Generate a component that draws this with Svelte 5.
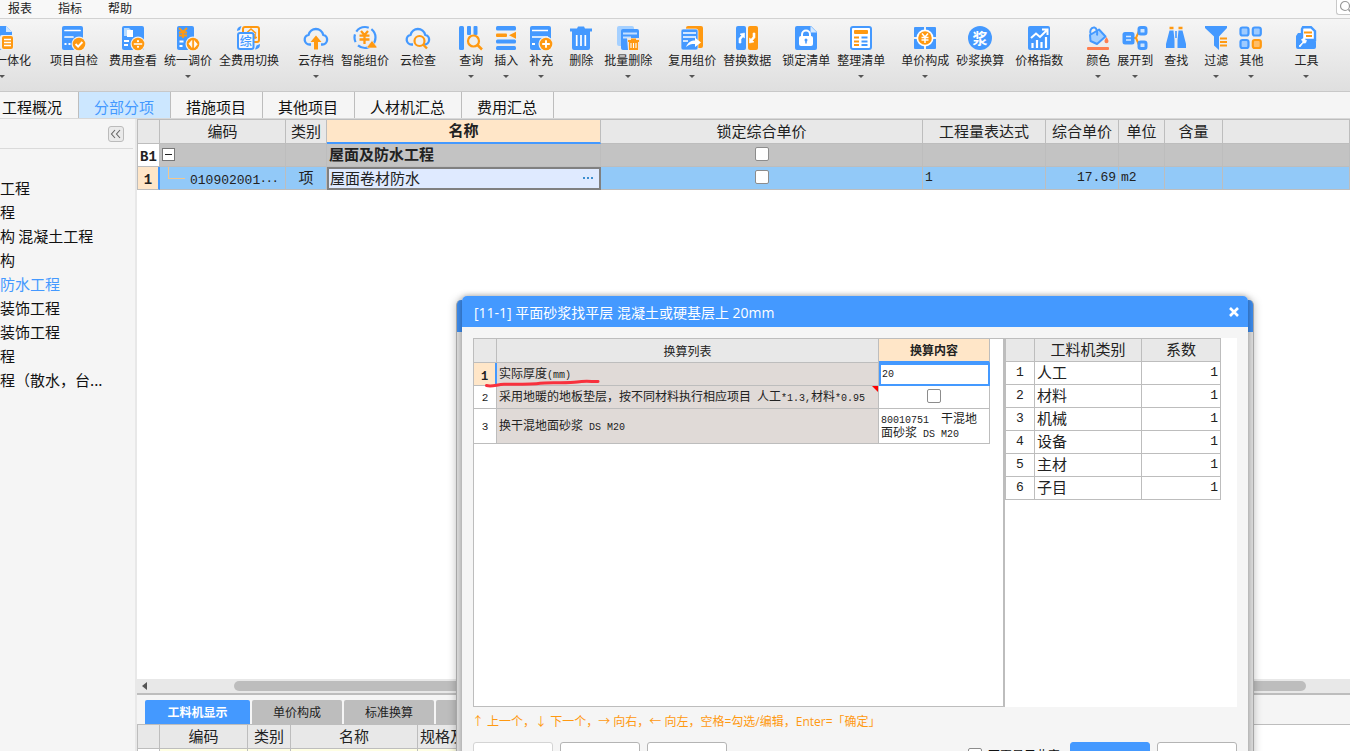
<script>
  const B = '#4499ff';
  const O = '#ff9911';
  const W = '#ffffff';
  const badge = `<circle cx="17" cy="18" r="7.5" fill="#f0f0f0"/><circle cx="17" cy="18" r="6.3" fill="${O}"/>`;
  const cloud = `<path d="M7 18.5H5.6A4.9 4.9 0 0 1 4.6 8.8 7.5 7.5 0 0 1 19.2 8.8 4.9 4.9 0 0 1 18.4 18.5H17" fill="none" stroke="${B}" stroke-width="2.3"/>`;
  const cjk = 'font-family="Noto Sans CJK SC" text-anchor="middle"';

  const icons = {
    page: `<path d="M0 0h16l6 6v18H0z" fill="${B}"/><path d="M16 0v6h6z" fill="#cfe6ff"/><rect x="10" y="9" width="14" height="15" rx="2" fill="#f0f0f0"/><rect x="12" y="10" width="11" height="13" rx="2" fill="${O}"/><path d="M14 13.5h7M14 16.5h7M14 19.5h7" stroke="#fff" stroke-width="1.3"/>`,
    check: `<rect x="0" y="0" width="21" height="24" rx="2" fill="${B}"/><path d="M3 4.5h15M3 11h8" stroke="#fff" stroke-width="1.7" stroke-linecap="round"/><path d="M2.5 18h2M6.5 18h2" stroke="#fff" stroke-width="2"/>${badge}<path d="M13.6 18l2.5 2.6 4.3-4.6" fill="none" stroke="#fff" stroke-width="1.9"/>`,
    fee: `<rect x="1" y="0" width="22" height="24" rx="2" fill="${B}"/><path d="M3 2h5l2 2v6H3z" fill="#b9dcff"/><path d="M6 4h6v7H6z" fill="#fff"/><path d="M3 15h5M3 19h4" stroke="#fff" stroke-width="2"/>${badge}<path d="M12.8 18h8.4" stroke="#fff" stroke-width="1.5"/><circle cx="17" cy="15.2" r="1.1" fill="#fff"/><circle cx="17" cy="20.8" r="1.1" fill="#fff"/>`,
    adjust: `<rect x="1" y="0" width="17" height="24" rx="2" fill="${B}"/><path d="M3 2l4 4L11 2M3 6.500h8M3 9.500h8M7 6v6" fill="none" stroke="${O}" stroke-width="1.800"/><path d="M3.500 15.500h4M3.500 20h3" stroke="#fff" stroke-width="1.800"/>${badge}<path d="M15.800 21.500v-7l-3 3.500M18.400 14.500v7l3-3.500" fill="#fff" stroke="#fff" stroke-width=".8"/>`,
    full: `<rect x="6" y="1" width="16" height="15" rx="2" fill="none" stroke="${O}" stroke-width="2"/><path d="M9 7.500L14 3l5 4.500M11 8h6M17 11.500h3M18 8v5" fill="none" stroke="${O}" stroke-width="1.600"/><rect x="1" y="7" width="15.500" height="16" rx="2" fill="#f3f8ff" stroke="${B}" stroke-width="2"/><text x="8.800" y="19.500" font-size="12" font-weight="500" fill="${B}" ${cjk}>综</text><path d="M0 5c0-3 1.500-4 4.500-5L3 4zM23 18c0 3-1 5-5 5.500l1.500-4z" fill="${B}"/>`,
    cloudUp: `${cloud}<path d="M12 9.500l5.500 6.500H14v7.500h-4V16H6.500z" fill="${O}"/>`,
    smart: `<circle cx="12" cy="11.500" r="10.500" fill="none" stroke="${B}" stroke-width="2.200" stroke-dasharray="24 4 8 3 14 3"/><path d="M8 5l3.500 4L15 5M6.500 9.700h10M6.500 13.500h10M11.500 9v9" fill="none" stroke="${O}" stroke-width="2.300"/><path d="M14 21l5-6.500 5 6.500a1 1 0 0 1-1 1h-8a1 1 0 0 1-1-1z" fill="${O}" stroke="#f0f0f0" stroke-width=".6"/>`,
    cloudFind: `${cloud}<circle cx="13.500" cy="15" r="5" fill="#f0f0f0" stroke="${O}" stroke-width="2.200"/><path d="M17 18.500l4 4" stroke="${O}" stroke-width="2.400"/>`,
    query: `<rect x="0" y="0" width="5" height="24" rx="1.500" fill="${B}"/><rect x="8" y="0" width="4" height="9" rx="1" fill="${B}"/><rect x="14.500" y="0" width="4" height="9" rx="1" fill="${B}"/><circle cx="14.500" cy="15" r="5.500" fill="#eee" stroke="${O}" stroke-width="2.200"/><path d="M18.500 19l4.500 4.500" stroke="${O}" stroke-width="2.500"/>`,
    insert: `<rect x="2" y="0" width="20" height="4.500" rx="1.500" fill="${B}"/><rect x="2" y="7.500" width="11" height="3.500" rx="1" fill="${O}"/><path d="M15 9.200l7-3.500v7z" fill="${O}"/><rect x="2" y="13.500" width="20" height="4" rx="1.500" fill="${B}"/><rect x="2" y="20" width="20" height="4" rx="1.500" fill="${B}"/>`,
    supply: `<rect x="1" y="0" width="21" height="24" rx="2" fill="${B}"/><path d="M3 4.500h16M3 11h16" stroke="#fff" stroke-width="1.600"/><path d="M3 18h3" stroke="#fff" stroke-width="2"/>${badge}<path d="M13.200 18h7.600M17 14.200v7.600" stroke="#fff" stroke-width="1.900"/>`,
    trash: `<path d="M1 2.500h7l1-2h6l1 2h7v3H1zM3 5h18v17a2 2 0 0 1-2 2H5a2 2 0 0 1-2-2z" fill="${B}"/><path d="M7.700 9v11M12 9v11M16.300 9v11" stroke="#fff" stroke-width="1.700"/>`,
    batch: `<rect x="1" y="0" width="17" height="20" rx="2" fill="#a5d0ff"/><rect x="5" y="3" width="18" height="21" rx="2" fill="${B}"/><path d="M7 7.500h14M7 11.500h8" stroke="#c5e0ff" stroke-width="1.800"/><path d="M11 12h13v12H12z" fill="#f0e6dc"/><path d="M12 14h3v-1.500h5V14h3v2h-1v8h-9v-8h-1z" fill="${O}"/><path d="M15 17v5M17.500 17v5M20 17v5" stroke="#fff" stroke-width="1.100"/>`,
    reuse: `<rect x="6" y="0" width="17" height="22" rx="2" fill="${O}"/><rect x="1" y="3" width="17" height="21" rx="2" fill="${B}" stroke="#f4f4f4" stroke-width=".7"/><path d="M3 7h13M3 11h13M3 15h5" stroke="#fff" stroke-width="1.700"/><path d="M6 21c2-5 5-6.500 9-6.500V11.500l6 5-6 4.500v-3c-4 0-6 .5-9 3z" fill="#fff"/>`,
    replace: `<rect x="1" y="0" width="10" height="24" rx="2" fill="${B}"/><rect x="13" y="0" width="10" height="24" rx="2" fill="${O}"/><path d="M4 17v-4.500l2.500-3L5 8l4.500-1V12L8 10.800l-2 2.400V17zM20 7v4.500l-2.500 3L19 16l-4.500 1V12l1.500 1.200 2-2.400V7z" fill="#fff" stroke="#fff" stroke-width=".6"/>`,
    lock: `<path d="M3 0h14l6 6v16a2 2 0 0 1-2 2H3a2 2 0 0 1-2-2V2a2 2 0 0 1 2-2z" fill="${B}"/><path d="M16.500 0v6.500H23z" fill="#d5e9ff"/><rect x="5" y="10" width="14" height="10" rx="2" fill="#fff"/><path d="M8 11V8.500a4 4 0 0 1 8 0V11" fill="none" stroke="#fff" stroke-width="2"/><circle cx="12" cy="14" r="1.500" fill="${B}"/><path d="M12 14v3.500" stroke="${B}" stroke-width="1.500"/>`,
    tidy: `<rect x="2" y="1" width="20" height="22" rx="2" fill="#fff" stroke="${B}" stroke-width="2"/><rect x="5" y="4" width="14" height="4" rx="1" fill="${O}"/><path d="M5 11.500h5M5 15.500h5M5 19h5" stroke="${O}" stroke-width="1.800"/><path d="M12.500 11.500h6M12.500 15.500h6M12.500 19h6" stroke="${B}" stroke-width="1.800"/>`,
    unit: `<rect x="1" y="1" width="22" height="22" rx="1" fill="${B}"/><path d="M12 0v24M0 12h24" stroke="#f0f0f0" stroke-width="2"/><circle cx="12" cy="12" r="8.500" fill="#fff"/><circle cx="12" cy="12" r="6.800" fill="${O}"/><path d="M9 7.500l3 3.500 3-3.500M8.500 11.500h7M8.500 14h7M12 11v6" fill="none" stroke="#fff" stroke-width="1.500"/>`,
    mortar: `<circle cx="12" cy="12" r="12" fill="${B}"/><text x="12" y="17.500" font-size="15" font-weight="700" fill="${W}" ${cjk}>浆</text>`,
    index: `<rect x="1" y="0" width="22" height="24" rx="2" fill="${B}"/><path d="M4 12l5-4.500 4 3.500 7-7M15 3.500h5.500V9" fill="none" stroke="#fff" stroke-width="2"/><path d="M5.500 22v-5M10 22v-8M14.500 22v-6M19 22V11" stroke="#fff" stroke-width="2.200"/>`,
    color: `<path d="M4 9l9-5.500 6.500 7L11 18 4.500 15z" fill="#a5d0ff" stroke="${B}" stroke-width="2" stroke-linejoin="round"/><path d="M5 9C3 5 5 1 8.500 1.500c2.500.5 3 5 2.500 8" fill="none" stroke="${B}" stroke-width="2"/><path d="M20.500 11c1.500 2.500 2 3.300 2 4.200a2 2 0 0 1-4 0c0-.9.500-1.700 2-4.200z" fill="#ff7f50"/><rect x="1" y="21" width="22" height="3" rx="1" fill="#ff7f50"/>`,
    expand: `<path d="M10 12h3l3-7h2M13 12l3 7h2" fill="none" stroke="${O}" stroke-width="2"/><rect x="-.5" y="6" width="12" height="12.500" rx="2.500" fill="${B}"/><path d="M3 10.500h5M3 14h5" stroke="#d5e9ff" stroke-width="1.700"/><rect x="16" y="1.500" width="7" height="6.500" rx="1.800" fill="#cce4ff" stroke="${B}" stroke-width="3"/><rect x="16" y="16" width="7" height="6.500" rx="1.800" fill="#cce4ff" stroke="${B}" stroke-width="3"/>`,
    find: `<path d="M5.500 2h4M14.500 2h4" stroke="${O}" stroke-width="2.500"/><path d="M5.500 4.500h4L10.500 14v8H2v-4zM18.500 4.500h-4L13.500 14v8H22v-4z" fill="${B}"/><path d="M12 5v7" stroke="${B}" stroke-width="1.600"/>`,
    filter: `<path d="M1 0h22v2l-8 8.500V24l-5-4.500v-9L1 2z" fill="${B}"/><path d="M16 12.500h7M16 16h7M16 19.500h7" stroke="${O}" stroke-width="2"/>`,
    other: `<g fill="#9ecbff" stroke="${B}" stroke-width="2.200"><rect x="1.500" y="1.500" width="8" height="8" rx="2"/><rect x="13.800" y="1.500" width="8" height="8" rx="2"/><rect x="1.500" y="14" width="8" height="8" rx="2"/></g><rect x="13.800" y="14" width="8" height="8" rx="2" fill="#ffbe69" stroke="${O}" stroke-width="2.200"/>`,
    tool: `<path d="M9 1.200h8l4 4V14H8V3z" fill="#fff" stroke="${B}" stroke-width="2.400"/><path d="M10 6.500h8M12 10h6" stroke="${O}" stroke-width="1.800"/><path d="M4 7h4v5l3 2h9a2 2 0 0 1 2 2v5a2 2 0 0 1-2 2H4a2 2 0 0 1-2-2V10z" fill="${B}"/><path d="M5 20l4-4-1.500-2.500 3-1.500.5 2 1.500.5-1 2.500H9l-3 4z" fill="#fff" stroke="#fff" stroke-width=".7"/>`
  };

  const tools = [
    ['项目自检', 'check', 0, 'g5'],
    ['费用查看', 'fee', 0, 'g3'],
    ['统一调价', 'adjust', 1, 'g2'],
    ['全费用切换', 'full', 0, 'g2'],
    ['云存档', 'cloudUp', 1, 'g5'],
    ['智能组价', 'smart', 0, 'g2'],
    ['云检查', 'cloudFind', 0, 'g3'],
    ['查询', 'query', 1, 'g6'],
    ['插入', 'insert', 1, 'g3'],
    ['补充', 'supply', 1, 'g3'],
    ['删除', 'trash', 0, 'g4'],
    ['批量删除', 'batch', 1, 'g3'],
    ['复用组价', 'reuse', 1, 'g4'],
    ['替换数据', 'replace', 0, 'g2'],
    ['锁定清单', 'lock', 0, 'g3'],
    ['整理清单', 'tidy', 1, 'g2'],
    ['单价构成', 'unit', 1, 'g4'],
    ['砂浆换算', 'mortar', 0, 'g2'],
    ['价格指数', 'index', 0, 'g3'],
    ['颜色', 'color', 1, 'g6'],
    ['展开到', 'expand', 1, 'g2'],
    ['查找', 'find', 0, 'g3'],
    ['过滤', 'filter', 1, 'g4'],
    ['其他', 'other', 1, 'g3'],
    ['工具', 'tool', 1, 'g8']
  ];

  const tabs = ['工程概况', '分部分项', '措施项目', '其他项目', '人材机汇总', '费用汇总'];
  const tree = ['工程', '程', '构 混凝土工程', '构', '防水工程', '装饰工程', '装饰工程', '程', '程（散水，台...'];
  const kinds = ['人工', '材料', '机械', '设备', '主材', '子目'];
  let activeTab = $state(1);
  let activeNode = $state(4);
  let thickness = $state('20');
</script>

<div class="app">
  <nav class="menu">
    <button>报表</button><button>指标</button><button>帮助</button>
    <button class="search" aria-label="搜索">
      <svg width="14" height="14" viewBox="0 0 14 14"><circle cx="6" cy="6" r="4.500" fill="none" stroke="#999" stroke-width="1.200" /><path d="M9.500 9.500l4 4" stroke="#999" stroke-width="1.600" /></svg>
    </button>
  </nav>

  <div class="toolbar">
    <button class="tool cut">
      <svg width="24" height="24" viewBox="0 0 24 24">{@html icons.page}</svg>
      <span>一体化</span><i class="caret"></i>
    </button>
    {#each tools as [label, icon, drop, gap]}
      <button class="tool {gap}">
        <svg width="24" height="24" viewBox="0 0 24 24">{@html icons[icon]}</svg>
        <span>{label}</span>
        {#if drop}<i class="caret"></i>{/if}
      </button>
    {/each}
  </div>

  <div class="tabs">
    {#each tabs as t, i}
      <button class:active={i === activeTab} onclick={() => (activeTab = i)}>{t}</button>
    {/each}
  </div>

  <div class="main">
    <aside>
      <div class="side-head">
        <button class="fold" aria-label="折叠"><svg width="14" height="14" viewBox="0 0 14 14"><path d="M6 3L2.500 7 6 11M11 3L7.500 7l3.500 4" fill="none" stroke="#666" stroke-width="1.100" /></svg></button>
      </div>
      <ul>
        {#each tree as n, i}
          <li><button class:active={i === activeNode} onclick={() => (activeNode = i)}>{n}</button></li>
        {/each}
      </ul>
    </aside>

    <section class="work">
      <div class="grid-wrap">
        <table class="grid list">
          <colgroup><col class="c22" /><col class="c126" /><col class="c41" /><col class="c274" /><col class="c322" /><col class="c123" /><col class="c73" /><col class="c46" /><col class="c58" /><col /></colgroup>
          <thead>
            <tr><th></th><th>编码</th><th>类别</th><th class="hot">名称</th><th>锁定综合单价</th><th>工程量表达式</th><th>综合单价</th><th>单位</th><th>含量</th><th></th></tr>
          </thead>
          <tbody>
            <tr class="group">
              <td class="num"><b class="mono">B1</b></td>
              <td><button class="minus" aria-label="收起"></button></td>
              <td></td><td><b>屋面及防水工程</b></td>
              <td class="mid"><input type="checkbox" aria-label="锁定屋面及防水工程" /></td>
              <td></td><td></td><td></td><td></td><td></td>
            </tr>
            <tr class="sel">
              <td class="num cur"><b class="mono">1</b></td>
              <td class="code"><i class="branch"></i><span class="mono">010902001</span><span class="dots">···</span></td>
              <td class="mid">项</td>
              <td class="edit"><div><span>屋面卷材防水</span><button aria-label="更多"><i></i><i></i><i></i></button></div></td>
              <td class="mid"><input type="checkbox" aria-label="锁定屋面卷材防水" /></td>
              <td class="mono">1</td><td class="mono end">17.69</td><td class="mono">m2</td><td></td><td></td>
            </tr>
          </tbody>
        </table>
      </div>
      <div class="scroll"><i class="arrow"></i><i class="thumb"></i></div>
      <div class="bottom">
        <div class="subtabs">
          <button class="active">工料机显示</button><button>单价构成</button><button>标准换算</button><button aria-label="更多页签"></button>
        </div>
        <div class="sub-wrap">
          <table class="grid sub">
            <colgroup><col class="c22" /><col class="c88" /><col class="c43" /><col class="c127" /><col class="c88" /></colgroup>
            <thead><tr><th></th><th>编码</th><th>类别</th><th>名称</th><th>规格及型号</th></tr></thead>
            <tbody><tr><td></td><td></td><td></td><td></td><td></td></tr></tbody>
          </table>
        </div>
      </div>
    </section>
  </div>

  <div class="backwin"></div>
  <div class="dialog" role="dialog" aria-labelledby="dlg-title">
    <header>
      <h1 id="dlg-title">[11-1] 平面砂浆找平层 混凝土或硬基层上 20mm</h1>
      <button aria-label="关闭"><svg width="12" height="12" viewBox="0 0 12 12"><path d="M2 2l8 8M10 2l-8 8" stroke="#fff" stroke-width="2.600" /></svg></button>
    </header>
    <div class="panes">
      <div class="left">
        <table class="grid conv">
          <colgroup><col class="c23" /><col class="c382" /><col class="c111" /></colgroup>
          <thead><tr><th></th><th>换算列表</th><th class="hot">换算内容</th></tr></thead>
          <tbody>
            <tr>
              <td class="num cur"><b class="mono">1</b></td>
              <td class="desc"><label for="thick">实际厚度<span class="mono">(mm)</span></label></td>
              <td class="input"><input id="thick" class="mono" type="text" bind:value={thickness} /></td>
            </tr>
            <tr>
              <td class="num mono">2</td>
              <td class="desc flag"><label for="heat">采用地暖的地板垫层，按不同材料执行相应项目<span class="mono">{' '}</span>人工<span class="mono">*1.3,</span>材料<span class="mono">*0.95</span></label></td>
              <td class="mid"><input id="heat" type="checkbox" /></td>
            </tr>
            <tr class="tall">
              <td class="num mono">3</td>
              <td class="desc">换干混地面砂浆<span class="mono">{' DS M20'}</span></td>
              <td><span class="mono">{'80010751  '}</span>干混地<br />面砂浆<span class="mono">{' DS M20'}</span></td>
            </tr>
          </tbody>
        </table>
        <svg class="mark" width="116" height="10" viewBox="0 0 116 10"><path d="M1.500 6.500C7 8 12 5.500 19 5.300S48 5.500 55 4.200 82 4.500 92 3 108 3 113 2.500" fill="none" stroke="#f8313d" stroke-width="3" stroke-linecap="round" /></svg>
      </div>
      <div class="right">
        <table class="grid kinds">
          <colgroup><col class="c29" /><col class="c107" /><col class="c79" /></colgroup>
          <thead><tr><th></th><th>工料机类别</th><th>系数</th></tr></thead>
          <tbody>
            {#each kinds as k, i}
              <tr><td class="num mono">{i + 1}</td><td>{k}</td><td class="mono end">1</td></tr>
            {/each}
          </tbody>
        </table>
      </div>
    </div>
    <p class="hint">↑ 上一个，↓ 下一个，→ 向右，← 向左，空格=勾选/编辑，Enter=「确定」</p>
    <footer>
      <button class="faint" aria-label="上移"></button><button aria-label="下移"></button><button aria-label="默认"></button>
      <label><input type="checkbox" />不再显示此窗</label>
      <button class="primary" aria-label="确定"></button><button aria-label="取消"></button>
    </footer>
  </div>
</div>

<style>
  :global(body) { margin: 0; overflow: hidden; }
  .app {
    position: relative; display: flex; flex-direction: column; height: 100vh; overflow: hidden;
    background: #f5f5f5; color: #222; font: 12px/16px "Noto Sans CJK SC", sans-serif;
  }
  button { border: 0; padding: 0; background: none; font: inherit; color: inherit; white-space: nowrap; flex: none; }
  .mono { font-family: "Liberation Mono", "Noto Sans CJK SC", monospace; white-space: pre; }

  .menu { display: flex; gap: 26px; height: 18px; padding-left: 8px; border-bottom: 1px solid #d2d2d2; background: #f8f8f8; align-items: flex-start; overflow: hidden; }
  .search { margin-left: auto; width: 14px; height: 15px; border: 1px solid #c8c8c8; border-top: 0; border-right: 0; border-radius: 0 0 0 3px; background: #fff; padding-left: 2px; overflow: hidden; }

  .toolbar { display: flex; align-items: flex-start; height: 72px; border-bottom: 1px solid #c8c8c8; background: linear-gradient(#f5f5f5, #dfdfdf); overflow: hidden; }
  .tool { display: flex; flex-direction: column; align-items: center; padding-top: 7px; }
  .tool svg { display: block; overflow: visible; }
  .tool span { line-height: 20px; }
  .caret { width: 0; border: 3px solid transparent; border-top-color: #555; border-bottom: 0; margin-top: 5px; }
  .cut { align-items: flex-start; margin-left: -10px; }
  .cut span { padding-left: 5px; }
  .cut .caret { margin-left: 9px; }
  .g2 { margin-left: 7px; }
  .g3 { margin-left: 11px; }
  .g4 { margin-left: 16px; }
  .g5 { margin-left: 19px; }
  .g6 { margin-left: 23px; }
  .g8 { margin-left: 31px; }

  .tabs { display: flex; height: 26px; border-bottom: 1px solid #d8d8d8; font-size: 15px; color: #111; }
  .tabs button { padding: 4px 16px 0 15px; border-right: 1px solid #bdbdbd; line-height: 22px; }
  .tabs button:first-child { padding-left: 2px; }
  .tabs .active { background: #cce7ff; color: #4499ff; }

  .main { flex: 1; display: flex; min-height: 0; }
  aside { width: 135px; flex: none; border-right: 2px solid #e8e8e8; overflow: hidden; }
  .side-head { height: 29px; margin-right: 2px; border-bottom: 1px solid #dadada; display: flex; justify-content: flex-end; align-items: center; padding-right: 9px; }
  .fold { box-sizing: border-box; width: 16px; height: 16px; border: 1px solid #bbb; border-radius: 3px; background: #eaeaea; }
  .fold svg { display: block; }
  ul { list-style: none; margin: 27px 0 0; padding: 0; font-size: 15px; color: #111; }
  li { height: 24px; }
  li button { line-height: 24px; display: block; }
  li .active { color: #4499ff; }

  .work { flex: 1; min-width: 0; display: flex; flex-direction: column; }
  .grid-wrap { flex: 1; min-height: 0; background: #fff; overflow: hidden; }
  .grid { table-layout: fixed; border-collapse: separate; border-spacing: 0; width: 100%; font-size: 15px; line-height: 18px; }
  .grid th, .grid td { box-sizing: border-box; height: 23px; padding: 0 2px 2px; border: 0 solid #bdbdbd; border-width: 0 1px 1px 0; white-space: nowrap; overflow: hidden; text-align: left; vertical-align: middle; }
  .grid th { height: 25px; background: #e8e8e8; border-top-width: 1px; font-weight: 400; text-align: center; }
  .grid th:first-child, .grid td:first-child { border-left-width: 1px; }
  .grid th.hot { background: #ffe6c8; font-weight: 700; border-bottom: 2px solid #4499ff; }
  .grid td.mono { font-size: 13px; padding-bottom: 0; }
  .grid td span.mono, .grid td b.mono { line-height: 0; }
  .grid td.num { text-align: center; padding: 0; background: #fff; }
  .grid .num .mono { font-size: 14px; }
  .grid td.cur { background: #ffe6c8; border-right: 2px solid #4499ff; }
  .grid .mid { text-align: center; }
  .grid .end { text-align: right; }
  .group td { background: #c3c3c3; }
  .sel td { background: #92c9f8; }
  .grid td.code { position: relative; padding: 0 0 0 30px; }
  .code .mono { font-size: 13px; }
  .dots { font: 700 10px/0 "Liberation Mono", monospace; }
  .branch { position: absolute; left: 8px; top: 0; width: 16px; height: 11px; border: 1px solid #f2c68c; border-width: 0 0 1px 1px; }
  .minus { display: flex; align-items: center; justify-content: center; box-sizing: border-box; width: 13px; height: 13px; border: 1px solid #777; background: #fff; }
  .minus::before { content: ""; width: 7px; height: 1px; background: #222; }
  .grid td.edit { padding: 0; border: 0; }
  .edit div { display: flex; justify-content: space-between; align-items: center; box-sizing: border-box; height: 23px; border: 2px solid #808080; background: #dfeaff; padding: 0 6px 1px 1px; }
  .edit button { display: flex; gap: 2px; }
  .edit i { width: 2px; height: 2px; background: #3d8fd0; }
  input[type="checkbox"] { appearance: none; box-sizing: border-box; display: block; width: 14px; height: 14px; margin: 0 auto; border: 1px solid #8c8c8c; border-radius: 2px; background: #fff; flex: none; }
  .c22 { width: 23px; } .c126 { width: 126px; } .c41 { width: 41px; } .c274 { width: 274px; } .c322 { width: 322px; }
  .c123 { width: 123px; } .c73 { width: 73px; } .c46 { width: 46px; } .c58 { width: 58px; } .c88 { width: 88px; }
  .c43 { width: 43px; } .c127 { width: 127px; } .c23 { width: 23px; } .c382 { width: 382px; } .c111 { width: 111px; }
  .c29 { width: 30px; } .c107 { width: 107px; } .c79 { width: 79px; }

  .scroll { display: flex; align-items: center; height: 14px; background: #e8e8e8; padding: 0 44px 0 5px; flex: none; }
  .arrow { border: 4px solid transparent; border-right: 5px solid #555; border-left: 0; }
  .thumb { flex: 1; height: 10px; margin-left: 87px; border-radius: 5px; background: #bdbdbd; }
  .bottom { flex: none; height: 58px; box-sizing: border-box; border-top: 2px solid #bdbdbd; overflow: hidden; }
  .subtabs { display: flex; gap: 2px; padding: 5px 0 0 8px; height: 24px; }
  .subtabs button { width: 90px; line-height: 24px; background: #bdbdbd; border-radius: 2px 2px 0 0; }
  .subtabs .active { width: 105px; background: #4499ff; color: #fff; font-weight: 700; }
  .sub-wrap { border-top: 1px solid #bdbdbd; background: #fff; height: 40px; }
  .grid.sub { width: 369px; }
  .grid.sub th { height: 24px; border-top: 0; }
  .grid.sub td { background: #ffffe4; }
  .grid.sub td:first-child { background: #fff; }
  .grid.sub th:last-child { text-align: left; }

  .backwin { position: absolute; left: 456px; right: 96px; top: 300px; bottom: -24px; box-sizing: border-box; border: 1px solid #a8a8a8; border-top: 0; border-radius: 5px 5px 0 0; background: linear-gradient(#3c8aea 32px, #dcdcdc 32px); box-shadow: 0 0 8px rgba(0, 0, 0, .25); }
  .dialog { position: absolute; left: 462px; right: 102px; top: 296px; bottom: -24px; display: flex; flex-direction: column; border-radius: 5px 5px 0 0; background: #f5f5f5; box-shadow: 0 0 6px rgba(0, 0, 0, .35); }
  header { display: flex; align-items: center; justify-content: space-between; height: 31px; padding: 0 8px 0 12px; border-radius: 5px 5px 0 0; background: #4499ff; color: #fff; flex: none; }
  h1 { margin: 0; font: 400 14px/20px "Open Sans", "Noto Sans CJK SC", sans-serif; padding-top: 2px; }
  header button svg { display: block; }
  .panes { flex: 1; min-height: 0; display: flex; margin: 11px 11px 0; background: #fff; }
  .left { position: relative; flex: 1; min-width: 0; border: 1px solid #bdbdbd; border-right-width: 2px; box-sizing: border-box; }
  .right { width: 232px; flex: none; }
  .grid.conv { width: 516px; font-size: 12px; line-height: 14px; }
  .conv .mono, .grid.conv td.mono { font-size: 10px; }
  .grid.conv th { height: 24px; border-top: 0; padding-bottom: 0; }
  .grid.conv th:first-child, .grid.conv td:first-child { border-left: 0; }
  .grid.conv td.num { padding-top: 2px; font-size: 11px; }
  .grid.conv .num .mono { font-size: 12px; }
  .grid.conv .desc { background: #e0dad7; position: relative; }
  .flag::after { content: ""; position: absolute; right: 0; top: 0; border: 3px solid #f00; border-left-color: transparent; border-bottom-color: transparent; }
  .grid.conv .tall td { height: 35px; }
  .grid.conv td.input { padding: 0; border: 0; }
  .input input { box-sizing: border-box; display: block; width: 100%; height: 23px; margin: 0; padding: 0 1px; border: 2px solid #4499ff; outline: 0; background: #fff; color: #222; }
  .mark { position: absolute; left: 11px; top: 40px; pointer-events: none; }
  .grid.kinds { width: 216px; }
  .grid.kinds th { height: 24px; }
  .hint { margin: 0; padding: 5px 10px 10px; line-height: 20px; color: #ff9911; font-family: "Open Sans", "Noto Sans CJK SC", sans-serif; flex: none; white-space: nowrap; }
  footer { display: flex; gap: 7px; padding: 0 11px 5px; flex: none; align-items: flex-start; }
  footer button { box-sizing: border-box; width: 80px; height: 28px; border: 1px solid #b4b4b4; border-radius: 3px; background: #fff; }
  footer .faint { border-color: #d4d4d4; }
  footer .primary { background: #4499ff; border-color: #4499ff; }
  footer label { display: flex; align-items: center; gap: 6px; margin-left: auto; padding: 5px 3px 0 0; height: 16px; color: #111; }
</style>
